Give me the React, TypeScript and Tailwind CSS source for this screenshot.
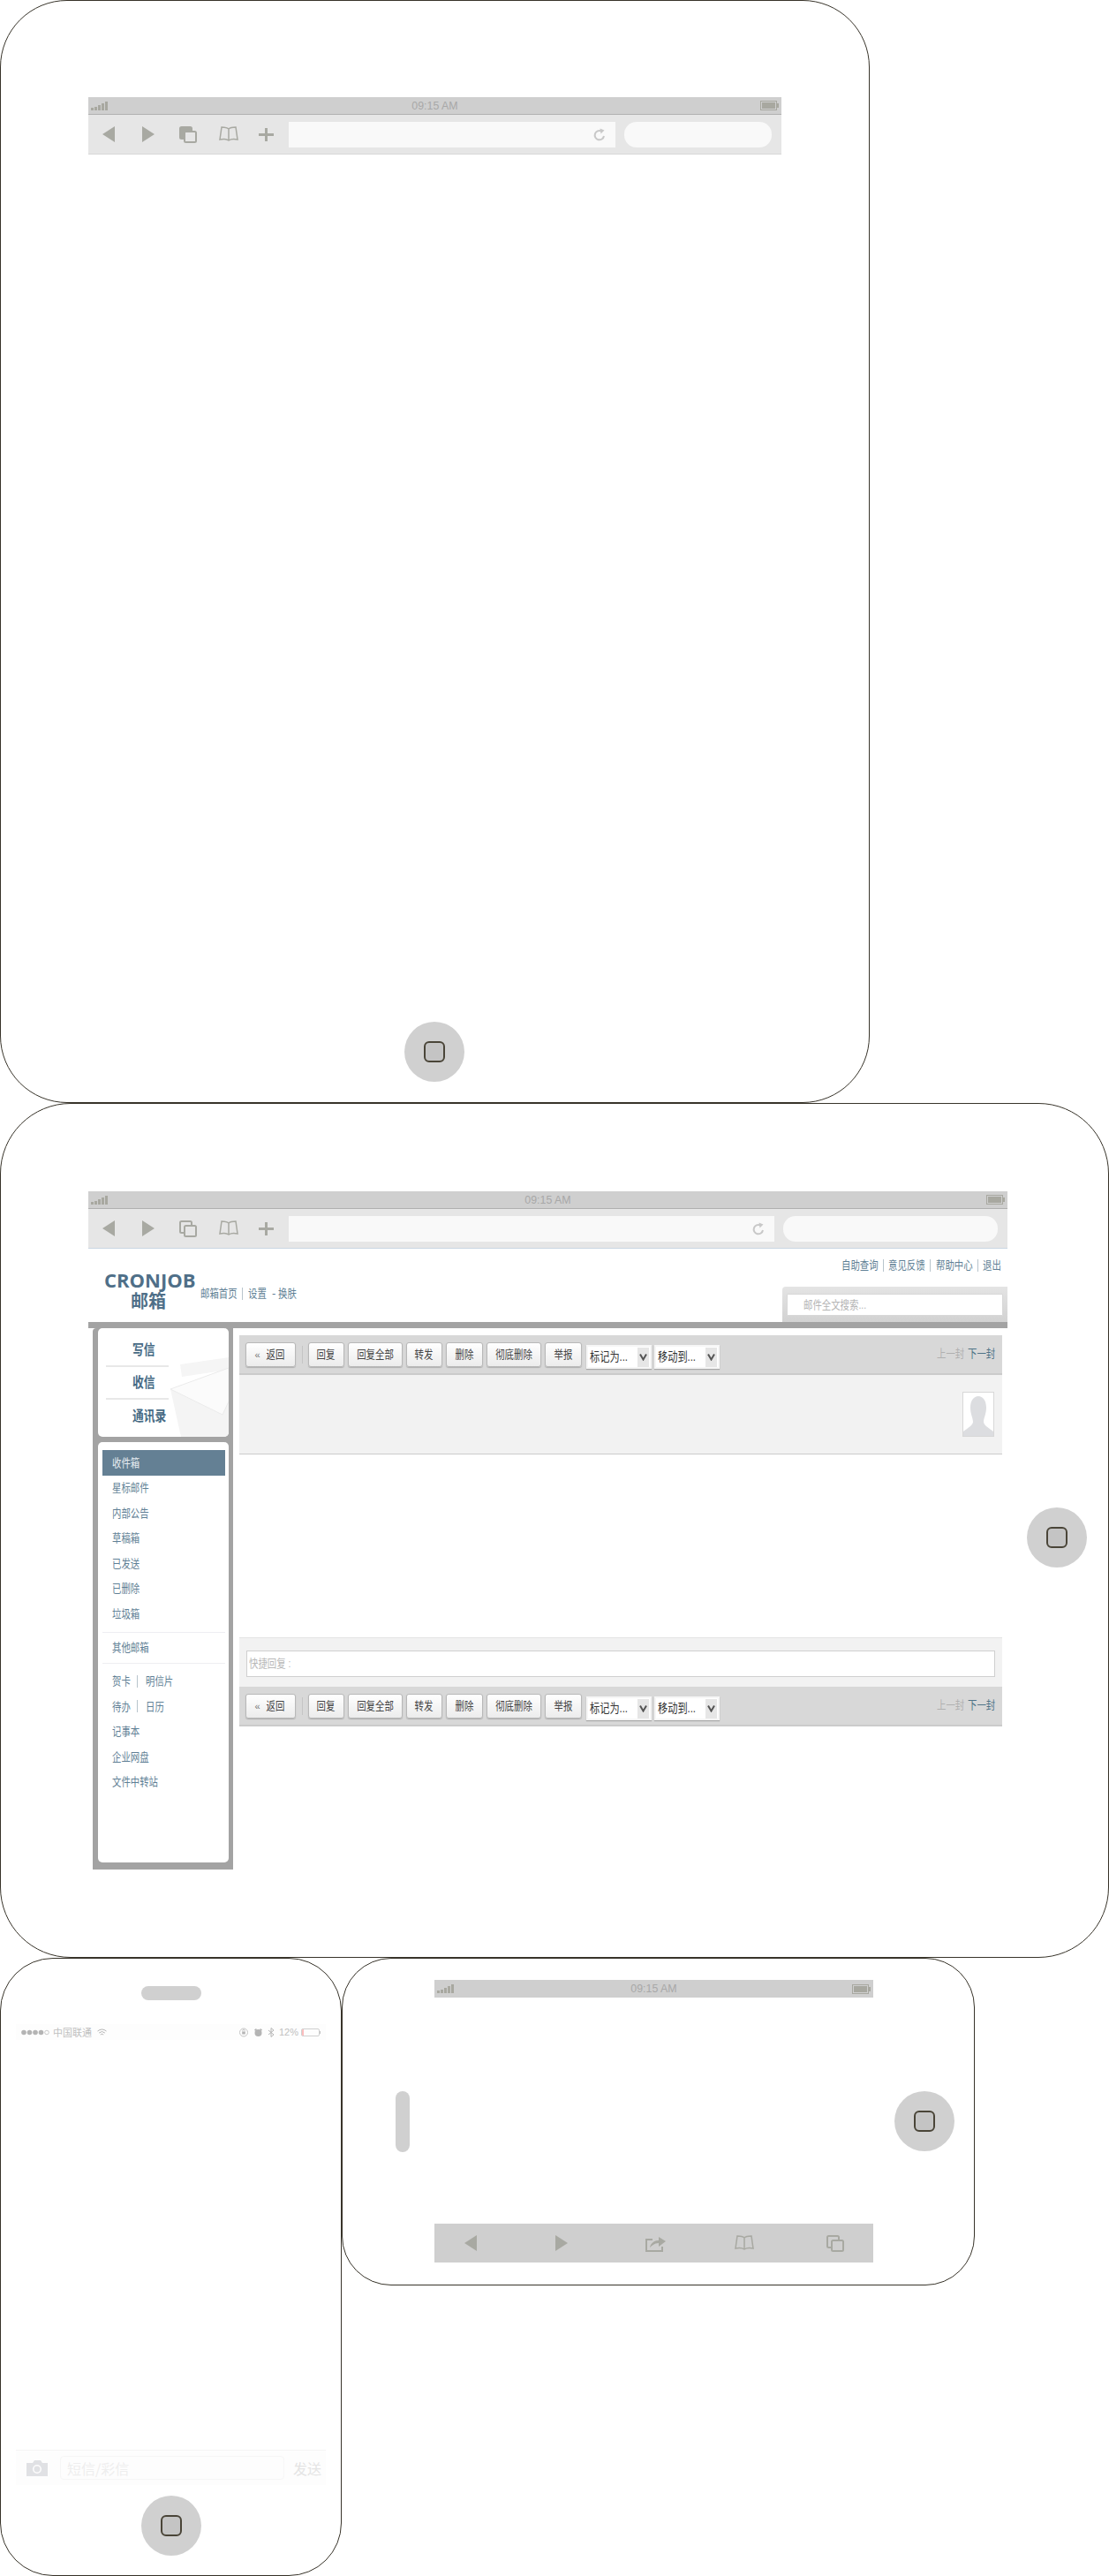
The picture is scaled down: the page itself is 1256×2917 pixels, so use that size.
import type { ReactNode } from "react";
import clsx from "clsx";

const CJK = "font-['Liberation_Sans','Noto_Sans_CJK_SC',sans-serif]";

// the mail page in the picture is stretched narrow, so its text is too
function Narrow({ children, className, center }: { children: ReactNode; className?: string; center?: boolean }) {
  return (
    <span className={clsx("inline-block whitespace-nowrap scale-x-[0.8]", center ? "origin-center" : "origin-left", className)}>
      {children}
    </span>
  );
}

function HomeButton({ className }: { className?: string }) {
  return (
    <div className={clsx("w-[68px] h-[68px] shrink-0 rounded-full bg-[#d0d0d0] flex items-center justify-center", className)}>
      <div className="w-[24px] h-[24px] rounded-[6px] border-2 border-[#4a4538] bg-[#c4c4c4]" />
    </div>
  );
}

function Signal() {
  return (
    <svg width="20" height="10" viewBox="0 0 20 10" fill="#a8a8a0">
      <rect x="0" y="7" width="3" height="3" />
      <rect x="4" y="6" width="3" height="4" />
      <rect x="8" y="4" width="3" height="6" />
      <rect x="12" y="2" width="3" height="8" />
      <rect x="16" y="0" width="3" height="10" />
    </svg>
  );
}

function Battery() {
  return (
    <svg width="21" height="11" viewBox="0 0 21 11">
      <rect x="0.5" y="0.5" width="18" height="10" fill="none" stroke="#a8a8a0" />
      <rect x="2" y="2" width="15" height="7" fill="#a8a8a0" />
      <rect x="19" y="3" width="2" height="5" fill="#a8a8a0" />
    </svg>
  );
}

function StatusBar({ className }: { className?: string }) {
  return (
    <div className={clsx("h-[19px] bg-[#cfcfcf] flex items-center justify-between px-[3px]", className)}>
      <Signal />
      <span className="font-['Liberation_Sans',sans-serif] text-[13px] text-[#a8a8a8] inline-block scale-x-[0.95]">09:15 AM</span>
      <Battery />
    </div>
  );
}

function Back() {
  return (
    <svg width="14" height="18" viewBox="0 0 14 18" fill="#a8a9a2">
      <path d="M14 0V18L0 9Z" />
    </svg>
  );
}

function Forward() {
  return (
    <svg width="14" height="18" viewBox="0 0 14 18" fill="#a8a9a2">
      <path d="M0 0V18L14 9Z" />
    </svg>
  );
}

function Tabs({ filled, bg = "#e6e6e6" }: { filled?: boolean; bg?: string }) {
  return (
    <svg width="20" height="19" viewBox="0 0 20 19" fill="none" stroke="#a8a9a2" strokeWidth="2">
      <rect x="1" y="1" width="13" height="13" rx="1.5" fill={filled ? "#a8a9a2" : "none"} />
      <rect x="6" y="6" width="13" height="12" rx="1.5" fill={bg} />
    </svg>
  );
}

function Book() {
  return (
    <svg width="22" height="18" viewBox="0 0 22 18" fill="none" stroke="#a8a9a2" strokeWidth="1.5">
      <path d="M11 3C9 1 6 1 3 1L1 15C5 14 8 14 11 16C14 14 17 14 21 15L19 1C16 1 13 1 11 3V16" />
    </svg>
  );
}

function Plus() {
  return (
    <svg width="17" height="15" viewBox="0 0 17 15" fill="#a8a9a2">
      <rect x="0" y="6" width="17" height="3" />
      <rect x="7" y="0" width="3" height="15" />
    </svg>
  );
}

function Reload() {
  return (
    <svg width="14" height="15" viewBox="0 0 14 15" fill="none" stroke="#c8c8c8" strokeWidth="2">
      <path d="M12 9A5.2 5.2 0 1 1 9 3.4" />
      <path d="M7.5 0.5L12.5 2.5L8.5 6.5Z" fill="#c8c8c8" stroke="none" />
    </svg>
  );
}

function Share() {
  return (
    <svg width="24" height="20" viewBox="0 0 24 20" fill="none" stroke="#a8a9a2" strokeWidth="2">
      <path d="M8 6H1V19H19V14" />
      <path d="M5 15C6 10 10 7 15 7V3L23 8L15 14V10C11 10 8 12 5 15Z" fill="#a8a9a2" stroke="none" />
    </svg>
  );
}

function BrowserBar({ filled, line }: { filled?: boolean; line: string }) {
  return (
    <div className={clsx("h-[46px] bg-[#e6e6e6] border-t border-b flex items-center border-t-[#b0b0b0]", line)}>
      <div className="ml-[16px] w-[14px]"><Back /></div>
      <div className="ml-[31px] w-[14px]"><Forward /></div>
      <div className="ml-[28px] w-[20px]"><Tabs filled={filled} /></div>
      <div className="ml-[25px] w-[22px]"><Book /></div>
      <div className="ml-[23px] w-[17px]"><Plus /></div>
      <div className="ml-[17px] h-[29px] flex-1 bg-[#f9f9f9] flex items-center justify-end pr-[11px]">
        <Reload />
      </div>
      <div className={clsx("ml-[10px] mr-[11px] h-[29px] rounded-[14px] bg-[#f9f9f9]", filled ? "w-[167px]" : "w-[243px]")} />
    </div>
  );
}

function ToolBtn({ label, width }: { label: string; width: string }) {
  return (
    <div className={clsx("h-[28px] rounded-[3px] border border-[#b8b8b8] bg-gradient-to-b from-white to-[#ececec] shadow-[0_1px_1px_#b0b0b0] flex items-center justify-center text-[13px] text-[#444]", width)}>
      <Narrow center>{label}</Narrow>
    </div>
  );
}

function FakeSelect({ label }: { label: string }) {
  return (
    <div className="w-[74px] h-[27px] bg-white border-2 border-[#f6f6f6] shadow-[0_1px_1px_#a8a8a8] flex items-center justify-between pl-[2px] pr-[1px] text-[14px] text-[#333]">
      <Narrow>{label}</Narrow>
      <div className="w-[13px] h-[22px] bg-[#e6e6e6] flex items-center justify-center">
        <svg width="9" height="9" viewBox="0 0 9 9" fill="none" stroke="#555" strokeWidth="2">
          <path d="M1 1.5L4.5 7.5L8 1.5" />
        </svg>
      </div>
    </div>
  );
}

function MailToolbar({ className }: { className?: string }) {
  return (
    <div className={clsx("h-[45px] bg-[#d8d8d8] border-b-2 border-[#cbcbcb] flex items-start pt-[8px] pl-[7px] pr-[6px]", className)}>
      <div className="w-[57px] h-[28px] rounded-[3px] border border-[#b8b8b8] bg-gradient-to-b from-white to-[#ececec] shadow-[0_1px_1px_#b0b0b0] flex items-center justify-center gap-[4px] text-[13px] text-[#444]">
        <span className="text-[11px] text-[#777]">«</span>
        <Narrow center className="w-[26px]">返回</Narrow>
      </div>
      <div className="ml-[7px] mr-[6px] mt-[4px] w-px h-[20px] bg-[#c4c4c4]" />
      <div className="flex gap-[4px]">
        <ToolBtn label="回复" width="w-[41px]" />
        <ToolBtn label="回复全部" width="w-[62px]" />
        <ToolBtn label="转发" width="w-[41px]" />
        <ToolBtn label="删除" width="w-[42px]" />
        <ToolBtn label="彻底删除" width="w-[62px]" />
        <ToolBtn label="举报" width="w-[42px]" />
      </div>
      <div className="flex gap-[3px] ml-[5px] mt-[3px]">
        <FakeSelect label="标记为..." />
        <FakeSelect label="移动到..." />
      </div>
      <div className="ml-auto w-[68px] mt-[3px] text-[13px] flex gap-[2px] justify-end">
        <span className="w-[33px]"><Narrow className="text-[#b0b0b0]">上一封</Narrow></span>
        <span className="w-[33px]"><Narrow className="text-[#4f7387]">下一封</Narrow></span>
      </div>
    </div>
  );
}

function MenuRow({ children, active }: { children: ReactNode; active?: boolean }) {
  return (
    <div className={clsx("h-[28.5px] flex items-center pl-[11px] text-[13px]", active ? "bg-[#648094] text-[#e8eef2]" : "text-[#5f7f95]")}>
      {children}
    </div>
  );
}

function Bar() {
  return <span className="inline-block w-px h-[14px] bg-[#b8c4cc]" />;
}

function MailPage() {
  return (
    <div className={CJK}>
      <div className="h-[83px] flex justify-between">
        <div className="flex items-start pt-[23px] pl-[18px]">
          <div className="w-[100px] text-center text-[#4f6f88] font-bold">
            <div className="font-['Open_Sans',sans-serif] text-[22px] leading-[24px] whitespace-nowrap">CRONJOB</div>
            <div className="text-[20px] leading-[26px]">邮箱</div>
          </div>
          <div className="ml-[9px] mt-[20px] h-[16px] flex items-center text-[13px] text-[#5f7f95]">
            <span className="w-[47px]"><Narrow>邮箱首页</Narrow></span>
            <Bar />
            <span className="ml-[6px] w-[27px]"><Narrow>设置</Narrow></span>
            <span className="w-[7px]">-</span>
            <span className="w-[21px]"><Narrow>换肤</Narrow></span>
          </div>
        </div>
        <div className="w-[255px] flex flex-col">
          <div className="h-[43px] pt-[11px] pr-[7px] flex justify-end text-[13px] text-[#5f7f95]">
            <div className="w-[181px] flex justify-between items-center h-[16px]">
              <span className="w-[42px]"><Narrow>自助查询</Narrow></span>
              <Bar />
              <span className="w-[42px]"><Narrow>意见反馈</Narrow></span>
              <Bar />
              <span className="w-[42px]"><Narrow>帮助中心</Narrow></span>
              <Bar />
              <span className="w-[21px]"><Narrow>退出</Narrow></span>
            </div>
          </div>
          <div className="h-[40px] rounded-tl-[4px] bg-gradient-to-b from-[#e4e4e4] to-[#d2d2d2] pl-[5px] pr-[5px] pt-[8px]">
            <div className="h-[25px] bg-white border border-[#d8d8d8] rounded-[1px] flex items-center pl-[18px] text-[13px] text-[#b4b4b4]">
              <Narrow>邮件全文搜索...</Narrow>
            </div>
          </div>
        </div>
      </div>

      <div className="border-t-[7px] border-[#a3a3a3] flex items-start">
        <div className="ml-[5px] w-[159px] h-[613px] bg-[#a3a3a3] rounded-tl-[4px] pl-[6px] pr-[5px] flex flex-col gap-[6px]">
          <div className="relative h-[123px] overflow-hidden rounded-[5px] bg-white pt-[7px] pl-[9px] shrink-0">
            <svg className="absolute right-0 bottom-0" width="66" height="90" viewBox="0 0 66 90">
              <path d="M11 8L66 0V14L13 22Z" fill="#f5f5f5" />
              <path d="M0 36L66 12V90H12Z" fill="#f4f4f4" />
              <path d="M0 36L66 12V50L59 65Z" fill="#fbfbfb" stroke="#ebebeb" />
            </svg>
            <div className="relative w-[71px] text-[16px] font-bold text-[#466a84]">
              <div className="h-[37px] pl-[30px] flex items-center border-b-2 border-[#e8e8e8]"><Narrow>写信</Narrow></div>
              <div className="h-[37px] pl-[30px] flex items-center border-b-2 border-[#e8e8e8]"><Narrow>收信</Narrow></div>
              <div className="h-[37px] pl-[30px] flex items-center"><Narrow>通讯录</Narrow></div>
            </div>
          </div>
          <div className="h-[476px] rounded-[5px] bg-white pl-[5px] pr-[4px] pt-[9px]">
            <MenuRow active><Narrow>收件箱</Narrow></MenuRow>
            <MenuRow><Narrow>星标邮件</Narrow></MenuRow>
            <MenuRow><Narrow>内部公告</Narrow></MenuRow>
            <MenuRow><Narrow>草稿箱</Narrow></MenuRow>
            <MenuRow><Narrow>已发送</Narrow></MenuRow>
            <MenuRow><Narrow>已删除</Narrow></MenuRow>
            <MenuRow><Narrow>垃圾箱</Narrow></MenuRow>
            <div className="mt-[6px] border-t border-[#eeeef2]" />
            <div className="h-[34px] flex items-center pl-[11px] text-[13px] text-[#5f7f95]"><Narrow>其他邮箱</Narrow></div>
            <div className="border-t border-[#eeeef2] mb-[6px]" />
            <MenuRow>
              <span className="w-[28px]"><Narrow>贺卡</Narrow></span><Bar /><span className="ml-[9px]"><Narrow>明信片</Narrow></span>
            </MenuRow>
            <MenuRow>
              <span className="w-[28px]"><Narrow>待办</Narrow></span><Bar /><span className="ml-[9px]"><Narrow>日历</Narrow></span>
            </MenuRow>
            <MenuRow><Narrow>记事本</Narrow></MenuRow>
            <MenuRow><Narrow>企业网盘</Narrow></MenuRow>
            <MenuRow><Narrow>文件中转站</Narrow></MenuRow>
          </div>
        </div>

        <div className="flex-1 pl-[7px] pr-[6px] pt-[8px]">
          <MailToolbar />
          <div className="h-[90px] bg-[#f2f2f2] border-b border-[#cccccc] flex justify-end items-start pt-[19px] pr-[9px]">
            <div className="w-[36px] h-[51px] bg-white border border-[#d8d8d8] overflow-hidden">
              <svg width="34" height="49" viewBox="0 0 34 49" fill="#dcdde0">
                <path d="M17 4C12 4 8 9 8 17C8 24 11 29 11 33C11 37 5 40 0 44V49H34V44C29 40 23 37 23 33C23 29 26 24 26 17C26 9 22 4 17 4Z" />
              </svg>
            </div>
          </div>
          <div className="mt-[207px] h-[56px] bg-[#f2f2f2] border-t border-[#e4e4e4] pt-[14px] px-[8px]">
            <div className="h-[30px] bg-white border border-[#cfcfcf] flex items-center pl-[2px] text-[13px] text-[#b8b8b8]">
              <Narrow>快捷回复 :</Narrow>
            </div>
          </div>
          <MailToolbar />
        </div>
      </div>
    </div>
  );
}

function PhoneStatus() {
  return (
    <div className="mt-[27px] mx-[17px] h-[18px] bg-[#fdfdfd] flex items-center px-[6px] text-[11px] text-[#c4c4c4] font-['Noto_Sans_CJK_SC',sans-serif]">
      <svg width="32" height="7" viewBox="0 0 32 7" fill="#b4b4b4">
        <circle cx="3" cy="3.5" r="2.8" />
        <circle cx="9.5" cy="3.5" r="2.8" />
        <circle cx="16" cy="3.5" r="2.8" />
        <circle cx="22.5" cy="3.5" r="2.8" />
        <circle cx="29" cy="3.5" r="2.3" fill="none" stroke="#b4b4b4" strokeWidth="0.7" />
      </svg>
      <span className="ml-[4px] text-[#c0c0c0]">中国联通</span>
      <svg className="ml-[6px]" width="11" height="9" viewBox="0 0 11 9" fill="none" stroke="#b4b4b4" strokeWidth="1">
        <path d="M0.5 3Q5.5 -1 10.5 3M2.2 5Q5.5 2 8.8 5M3.8 7Q5.5 5.5 7.2 7" />
      </svg>
      <svg className="ml-auto" width="11" height="11" viewBox="0 0 11 11" fill="none" stroke="#c4c4c4">
        <circle cx="5" cy="5.5" r="4.5" />
        <rect x="3.2" y="4.5" width="3.6" height="3" fill="#b4b4b4" stroke="none" />
        <path d="M3.8 4.5V3.4A1.2 1.2 0 0 1 6.2 3.4V4.5" />
      </svg>
      <svg className="ml-[6px]" width="9" height="9" viewBox="0 0 9 9" fill="#b4b4b4">
        <circle cx="4.5" cy="5" r="4" />
        <path d="M0 1.5L2 0L3 1.2L1 2.8ZM9 1.5L7 0L6 1.2L8 2.8Z" />
      </svg>
      <svg className="ml-[6px]" width="8" height="11" viewBox="0 0 8 11" fill="none" stroke="#b4b4b4">
        <path d="M1 3L7 8L4 10.5V0.5L7 3L1 8" />
      </svg>
      <span className="ml-[5px] font-['Liberation_Sans',sans-serif] text-[11px] text-[#c0c0c0]">12%</span>
      <div className="ml-[3px] w-[21px] h-[9px] rounded-[2px] border border-[#d0d0d0] overflow-hidden">
        <div className="w-[2px] h-full bg-[#fbbcbc]" />
      </div>
      <div className="w-[1px] h-[3px] bg-[#c0c0c0]" />
    </div>
  );
}

function PhoneBottom() {
  return (
    <div className="mx-[17px] mt-[464px] h-[40px] bg-[#fdfdfd] border-t border-[#f4f4f4] flex items-center pl-[12px] pr-[5px] font-['Noto_Sans_CJK_SC',sans-serif]">
      <svg width="24" height="18" viewBox="0 0 24 18" fill="#e0e1e4">
        <path fillRule="evenodd" d="M1 3H7L9 0H16L18 3H24V18H0V3ZM12 5A5 5 0 1 0 12.01 15A5 5 0 1 0 12 5ZM12 6.5A3.5 3.5 0 1 1 11.99 13.5A3.5 3.5 0 1 1 12 6.5Z" />
      </svg>
      <div className="ml-[14px] w-[254px] h-[27px] rounded-[4px] border border-[#f6f6f6] flex items-center pl-[7px] text-[16px] text-[#eeeeee]">
        短信/彩信
      </div>
      <span className="ml-auto text-[16px] text-[#e4e4e4]">发送</span>
    </div>
  );
}

export default function App() {
  return (
    <div className="w-[1256px] h-[2917px] bg-white overflow-hidden">
      <div className="w-[985px] h-[1249px] border border-[#38342a] rounded-[76px] pl-[99px] pt-[109px]">
        <div className="w-[785px]">
          <StatusBar />
          <BrowserBar filled line="border-b-[#d8d8d8]" />
        </div>
        <HomeButton className="mt-[982px] ml-[358px]" />
      </div>

      <div className="w-[1256px] h-[968px] border border-[#38342a] rounded-[80px] pl-[99px] pt-[99px] flex items-start">
        <div className="w-[1041px]">
          <StatusBar />
          <BrowserBar line="border-b-[#c9d6e2]" />
          <MailPage />
        </div>
        <HomeButton className="ml-[22px] mt-[358px]" />
      </div>

      <div className="flex items-start">
        <div className="w-[387px] h-[700px] shrink-0 border border-[#38342a] rounded-[60px] flex flex-col">
          <div className="mt-[31px] mx-auto w-[68px] h-[16px] rounded-[8px] bg-[#d0d0d0]" />
          <PhoneStatus />
          <PhoneBottom />
          <HomeButton className="mt-[12px] mx-auto" />
        </div>
        <div className="w-[717px] h-[371px] border border-[#38342a] rounded-[56px] pl-[104px] pt-[24px] flex items-start">
          <div className="w-[16px] mt-[126px] -ml-[44px] mr-[28px] h-[69px] rounded-[8px] bg-[#d0d0d0]" />
          <div className="w-[497px] flex flex-col">
            <StatusBar className="h-[20px]" />
            <div className="mt-[256px] h-[44px] bg-[#cfcfcf] flex items-center pl-[34px]">
              <div className="w-[14px]"><Back /></div>
              <div className="ml-[89px] w-[14px]"><Forward /></div>
              <div className="ml-[88px] w-[24px]"><Share /></div>
              <div className="ml-[77px] w-[22px]"><Book /></div>
              <div className="ml-[82px] w-[20px]"><Tabs bg="#cfcfcf" /></div>
            </div>
          </div>
          <HomeButton className="ml-[24px] mt-[126px]" />
        </div>
      </div>
    </div>
  );
}
